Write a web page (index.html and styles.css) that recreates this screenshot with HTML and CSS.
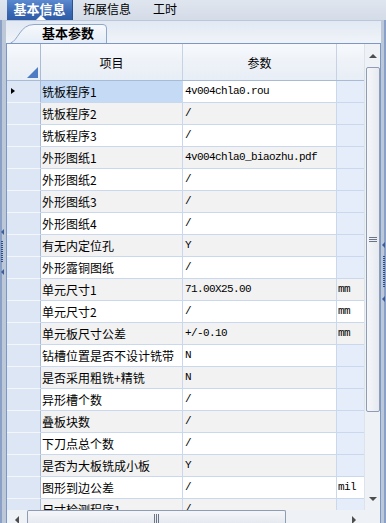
FILE: index.html
```html
<!DOCTYPE html>
<html>
<head>
<meta charset="utf-8">
<link rel="stylesheet" href="styles.css">
</head>
<body>
<div class="app">
  <div class="tabbar">
    <div class="tab active">基本信息<span class="pointer"></span></div>
    <div class="tab t2">拓展信息</div>
    <div class="tab t3">工时</div>
  </div>
  <div class="body">
    <div class="side left">
      <span class="arr"></span>
      <span class="dots"></span>
      <span class="arr"></span>
    </div>
    <div class="main">
      <div class="subbar">
        <div class="subtab">
          <svg class="subtab-shape" width="98" height="23" viewBox="0 0 98 23">
            <defs>
              <linearGradient id="tg" x1="0" y1="0" x2="0" y2="1">
                <stop offset="0" stop-color="#f7f9fc"/>
                <stop offset="1" stop-color="#e6edf7"/>
              </linearGradient>
            </defs>
            <path d="M0.5 23 C8 21 10 4.5 24 4.5 L93 4.5 Q96.5 4.5 96.5 8 L96.5 23" fill="url(#tg)" stroke="#8ea7cc" stroke-width="1"/>
          </svg>
          <span class="subtab-text">基本参数</span>
        </div>
      </div>
      <div class="grid">
        <div class="gridtop">
          <div class="table">
            <div class="hdr">
              <div class="hc corner"><span class="tri"></span></div>
              <div class="hc">项目</div>
              <div class="hc">参数</div>
              <div class="hc last"></div>
            </div>
            <div class="rows">
              <div class="row odd sel"><div class="rh"><span class="ptr"></span></div><div class="c name">铣板程序1</div><div class="c val">4v004chla0.rou</div><div class="c unit"></div></div>
              <div class="row even"><div class="rh"></div><div class="c name">铣板程序2</div><div class="c val">/</div><div class="c unit"></div></div>
              <div class="row odd"><div class="rh"></div><div class="c name">铣板程序3</div><div class="c val">/</div><div class="c unit"></div></div>
              <div class="row even"><div class="rh"></div><div class="c name">外形图纸1</div><div class="c val">4v004chla0_biaozhu.pdf</div><div class="c unit"></div></div>
              <div class="row odd"><div class="rh"></div><div class="c name">外形图纸2</div><div class="c val">/</div><div class="c unit"></div></div>
              <div class="row even"><div class="rh"></div><div class="c name">外形图纸3</div><div class="c val">/</div><div class="c unit"></div></div>
              <div class="row odd"><div class="rh"></div><div class="c name">外形图纸4</div><div class="c val">/</div><div class="c unit"></div></div>
              <div class="row even"><div class="rh"></div><div class="c name">有无内定位孔</div><div class="c val">Y</div><div class="c unit"></div></div>
              <div class="row odd"><div class="rh"></div><div class="c name">外形露铜图纸</div><div class="c val">/</div><div class="c unit"></div></div>
              <div class="row even"><div class="rh"></div><div class="c name">单元尺寸1</div><div class="c val">71.00X25.00</div><div class="c unit has">mm</div></div>
              <div class="row odd"><div class="rh"></div><div class="c name">单元尺寸2</div><div class="c val">/</div><div class="c unit has">mm</div></div>
              <div class="row even"><div class="rh"></div><div class="c name">单元板尺寸公差</div><div class="c val">+/-0.10</div><div class="c unit has">mm</div></div>
              <div class="row odd"><div class="rh"></div><div class="c name">钻槽位置是否不设计铣带</div><div class="c val">N</div><div class="c unit"></div></div>
              <div class="row even"><div class="rh"></div><div class="c name">是否采用粗铣+精铣</div><div class="c val">N</div><div class="c unit"></div></div>
              <div class="row odd"><div class="rh"></div><div class="c name">异形槽个数</div><div class="c val">/</div><div class="c unit"></div></div>
              <div class="row even"><div class="rh"></div><div class="c name">叠板块数</div><div class="c val">/</div><div class="c unit"></div></div>
              <div class="row odd"><div class="rh"></div><div class="c name">下刀点总个数</div><div class="c val">/</div><div class="c unit"></div></div>
              <div class="row even"><div class="rh"></div><div class="c name">是否为大板铣成小板</div><div class="c val">Y</div><div class="c unit"></div></div>
              <div class="row odd"><div class="rh"></div><div class="c name">图形到边公差</div><div class="c val">/</div><div class="c unit has">mil</div></div>
              <div class="row even"><div class="rh"></div><div class="c name">尺寸检测程序1</div><div class="c val">/</div><div class="c unit"></div></div>
            </div>
          </div>
          <div class="vscroll">
            <div class="sbtn up"><span class="tri-up"></span></div>
            <div class="vthumb"><span class="grip-h"></span></div>
            <div class="vspace"></div>
            <div class="sbtn down"><span class="tri-down"></span></div>
          </div>
        </div>
        <div class="gridbottom">
          <div class="hscroll">
            <div class="hbtn"><span class="tri-left"></span></div>
            <div class="hthumb"><span class="grip-v"></span></div>
            <div class="hspace"></div>
            <div class="hbtn"><span class="tri-right"></span></div>
          </div>
          <div class="scorner"></div>
        </div>
      </div>
    </div>
    <div class="side right">
      <span class="arr"></span>
      <span class="dots"></span>
      <span class="arr"></span>
    </div>
  </div>
</div>
</body>
</html>
```
FILE: styles.css
```css
* { box-sizing: border-box; }
html, body { margin: 0; padding: 0; }
body {
  width: 386px;
  height: 523px;
  overflow: hidden;
  font-family: "Noto Sans CJK SC", "Noto Sans", sans-serif;
  font-size: 12px;
  color: #000;
  background: #d6dee9;
}
.app { display: flex; flex-direction: column; height: 523px; }

/* top tabs */
.tabbar {
  height: 20px;
  flex: none;
  display: flex;
  padding-left: 7px;
  background: linear-gradient(#dfe6ef, #d4dce8);
}
.tab { line-height: 18px; font-size: 12px; white-space: nowrap; }
.tab.active {
  position: relative;
  width: 66px;
  text-align: center;
  font-size: 13px;
  font-weight: bold;
  color: #fff;
  background: linear-gradient(#5c8ad0, #3a68b3 60%, #2f5ca6);
  border-right: 1px solid #2b5190;
}
.pointer {
  position: absolute;
  left: 29px;
  bottom: 0;
  width: 0; height: 0;
  border-left: 5px solid transparent;
  border-right: 5px solid transparent;
  border-bottom: 5px solid #fff;
}
.t2 { margin-left: 10px; }
.t3 { margin-left: 22px; }

.body { flex: 1; display: flex; min-height: 0; }
.side {
  flex: none;
  display: flex;
  flex-direction: column;
  align-items: center;
  gap: 6px;
}
.side.left {
  width: 6px;
  padding-top: 209px;
  background: linear-gradient(to right, #8aa0c6 0 2px, #bcc7d8 2px);
  align-items: flex-start;
  padding-left: 1px;
}
.side.right {
  width: 5px;
  padding-top: 222px;
  background: linear-gradient(to right, #bcc7d8 0 3px, #8aa0c6 3px);
  gap: 8px;
}
.arr {
  width: 0; height: 0;
  border-top: 3px solid transparent;
  border-bottom: 3px solid transparent;
  border-right: 3px solid #3c5f9a;
}
.dots {
  width: 2px;
  height: 22px;
  background: repeating-linear-gradient(#2c4f8c 0 1px, transparent 1px 2px);
}
.side.right .dots { height: 32px; }

.main { flex: 1; display: flex; flex-direction: column; min-width: 0; }

.subbar {
  flex: none;
  height: 23px;
  border-top: 1px solid #bac7da;
  background: linear-gradient(#e2e9f3, #f0f4f9);
  padding-left: 4px;
  display: flex;
  align-items: flex-end;
}
.subtab {
  position: relative;
  width: 98px;
  height: 22px;
}
.subtab-shape { position: absolute; left: 0; bottom: 0; }
.subtab-text {
  position: absolute;
  left: 32px;
  top: 3px;
  font-weight: bold;
  font-size: 13px;
  line-height: 18px;
}

.grid {
  flex: 1;
  min-height: 0;
  display: flex;
  flex-direction: column;
  border: 1px solid #7b97c6;
  border-bottom: none;
  background: #fff;
}
.gridtop { flex: 1; min-height: 0; display: flex; }
.table { width: 357px; flex: none; display: flex; flex-direction: column; overflow: hidden; }

.hdr {
  flex: none;
  height: 37px;
  display: grid;
  grid-template-columns: 34px 142px 154px 27px;
  border-bottom: 1px solid #a8bad4;
  background: linear-gradient(#f7f9fc, #eef2f8 50%, #e8eef6);
}
.hc {
  display: flex;
  align-items: center;
  justify-content: center;
  border-right: 1px solid #c6d3e6;
  padding-top: 1px;
}
.hc.last { border-right: none; }
.corner { position: relative; border-right: 1px solid #a9bbd6; }
.tri {
  position: absolute;
  right: 2px;
  bottom: 2px;
  width: 0; height: 0;
  border-left: 11px solid transparent;
  border-bottom: 11px solid #4d7cc4;
}

.rows { flex: 1; min-height: 0; overflow: hidden; }
.row {
  display: grid;
  grid-template-columns: 34px 142px 154px 27px;
  height: 22px;
}
.rh {
  position: relative;
  background: #dde6f4;
  border-right: 1px solid #a9bbd6;
  border-bottom: 1px solid #f3f6fb;
}
.ptr {
  position: absolute;
  left: 4px;
  top: 7px;
  width: 0; height: 0;
  border-top: 3.5px solid transparent;
  border-bottom: 3.5px solid transparent;
  border-left: 4px solid #000;
}
.c {
  border-bottom: 1px solid #c9d8ec;
  border-right: 1px solid #c9d8ec;
  line-height: 21px;
  white-space: nowrap;
  overflow: hidden;
}
.name { padding-left: 1px; }
.val, .unit {
  font-family: "Liberation Mono", "DejaVu Sans Mono", monospace;
  font-size: 11px;
  letter-spacing: -0.6px;
  padding-left: 2px;
}
.unit { border-right: none; padding-left: 1px; background: #e4edf9; }
.row.even .c { background: #f2f2f2; }
.row .unit.has { background: #fff; }
.row.even .unit.has { background: #f2f2f2; }
.row.even .unit:not(.has) { background: #e4edf9; }
.row.sel .name { background: #c5dbf5; }

/* vertical scrollbar */
.vscroll {
  width: 16px;
  flex: none;
  display: flex;
  flex-direction: column;
  background: #eef1f5;
  border-left: 1px solid #dde3ec;
}
.sbtn { height: 23px; display: flex; align-items: center; justify-content: center; flex: none; }
.sbtn.down { height: 17px; align-items: flex-start; }
.tri-up {
  width: 0; height: 0;
  border-left: 4px solid transparent;
  border-right: 4px solid transparent;
  border-bottom: 4px solid #4d4d4d;
}
.tri-down {
  width: 0; height: 0;
  border-left: 4px solid transparent;
  border-right: 4px solid transparent;
  border-top: 4px solid #4d4d4d;
  margin-top: 4px;
}
.vthumb {
  flex: none;
  height: 345px;
  margin: 0 0 0 1px;
  width: 14px;
  border: 1px solid #8e9db3;
  border-radius: 2px;
  background: linear-gradient(to right, #f4f6f9, #e6eaf0);
  display: flex;
  align-items: center;
  justify-content: center;
}
.grip-h {
  width: 8px;
  height: 5px;
  background: repeating-linear-gradient(#6b7585 0 1px, transparent 1px 2px);
}
.vspace { flex: 1; }

/* horizontal scrollbar */
.gridbottom { flex: none; height: 13px; display: flex; }
.hscroll {
  width: 357px;
  display: flex;
  align-items: stretch;
  background: #eef1f5;
}
.hbtn { width: 20px; flex: none; display: flex; align-items: flex-end; justify-content: center; padding-bottom: 0; }
.tri-left {
  width: 0; height: 0;
  border-top: 4px solid transparent;
  border-bottom: 4px solid transparent;
  border-right: 4px solid #4d4d4d;
  margin-bottom: -1px;
}
.tri-right {
  width: 0; height: 0;
  border-top: 4px solid transparent;
  border-bottom: 4px solid transparent;
  border-left: 4px solid #4d4d4d;
  margin-bottom: -1px;
}
.hthumb {
  margin-left: 0;
  width: 259px;
  flex: none;
  border: 1px solid #8e9db3;
  border-bottom: none;
  border-radius: 2px 2px 0 0;
  background: linear-gradient(#f4f6f9, #e6eaf0);
  display: flex;
  justify-content: center;
  padding-top: 3px;
}
.grip-v {
  width: 5px;
  height: 9px;
  background: repeating-linear-gradient(to right, #6b7585 0 1px, transparent 1px 2px);
}
.hspace { flex: 1; }
.scorner { flex: 1; background: #eef1f5; }
```
